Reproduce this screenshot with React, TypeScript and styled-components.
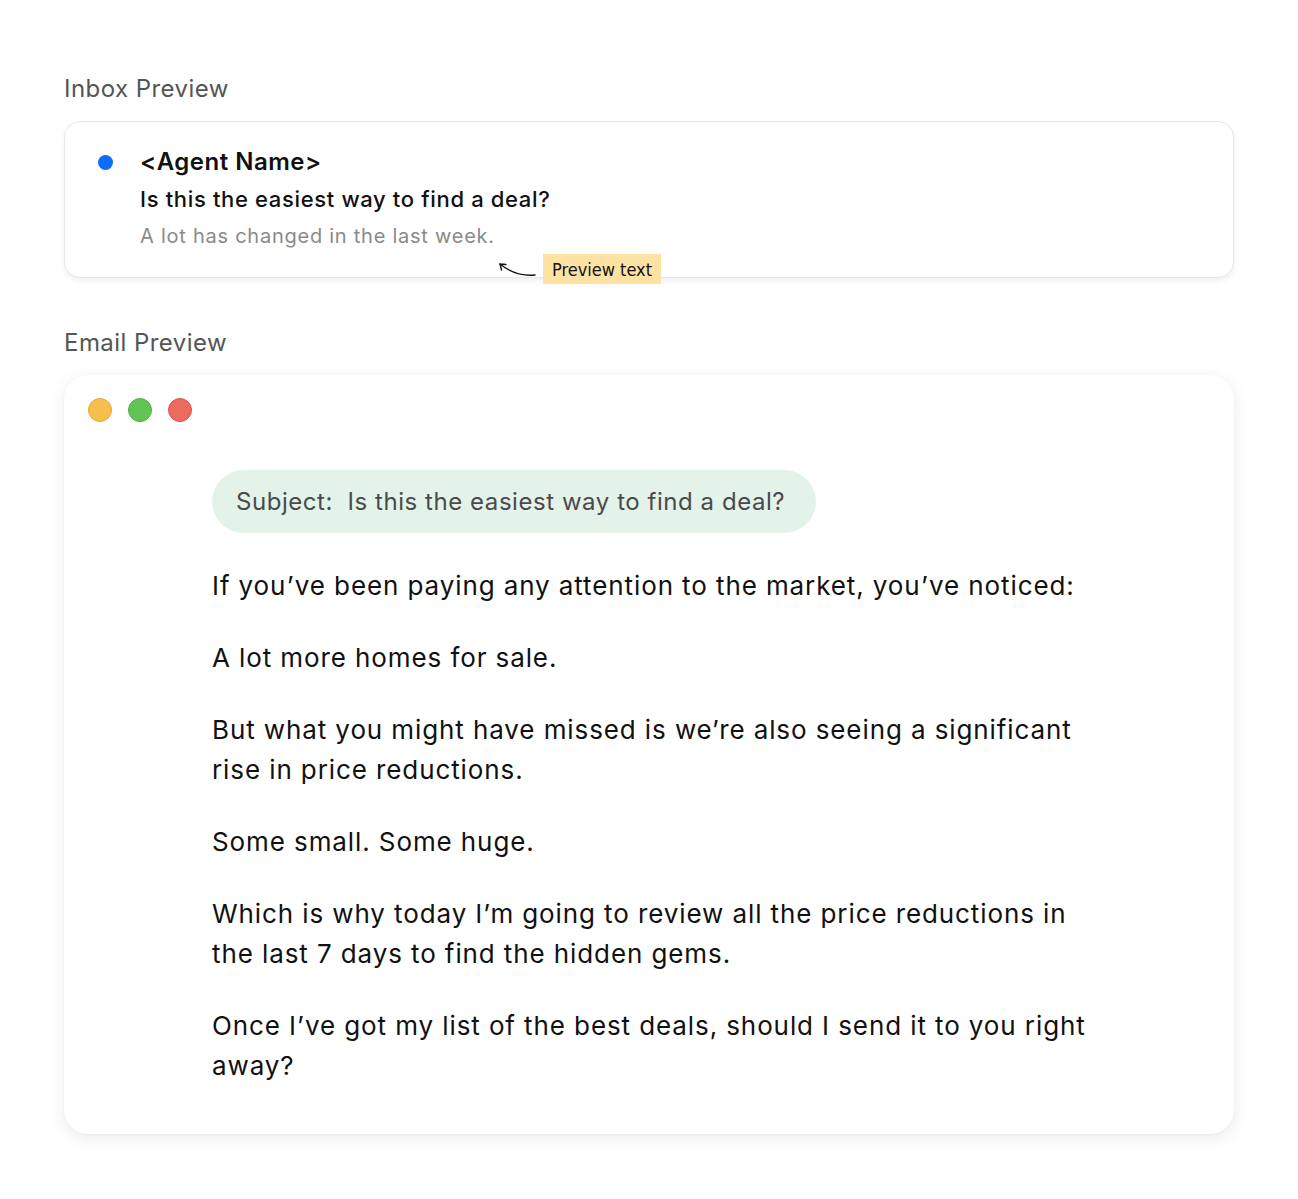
import styled, { createGlobalStyle } from 'styled-components'

const GlobalStyle = createGlobalStyle`
  html, body {
    margin: 0;
    padding: 0;
    background: #ffffff;
  }
  body {
    font-family: Inter, 'Noto Sans', sans-serif;
    color: #111111;
  }
`

// ── Layout ────────────────────────────────────────────────────────────────

const Page = styled.main`
  display: flex;
  flex-direction: column;
  padding: 74px 64px 64px;
  width: 1170px;
`

const SectionLabel = styled.h2`
  margin: 0 0 17px;
  font-size: 24px;
  line-height: 30px;
  font-weight: 400;
  letter-spacing: 0.45px;
  color: #555555;
`

// ── Inbox preview ─────────────────────────────────────────────────────────

const InboxCard = styled.section`
  position: relative;
  display: flex;
  gap: 27px;
  padding: 25px 32px 26px 33px;
  margin-bottom: 50px;
  border: 1px solid #e6e6e6;
  border-radius: 16px;
  background: #ffffff;
  box-shadow: 0 3px 6px rgba(0, 0, 0, 0.06);
`

const UnreadDot = styled.span`
  flex-shrink: 0;
  width: 15px;
  height: 15px;
  margin-top: 8px;
  border-radius: 999px;
  background: #0b6cff;
`

const InboxLines = styled.div`
  display: flex;
  flex-direction: column;
  gap: 7px;
`

const InboxLine = styled.div<{ $tone: 'sender' | 'subject' | 'preview' }>`
  line-height: 30px;
  font-size: ${({ $tone }) =>
    $tone === 'sender' ? '24px' : $tone === 'subject' ? '22px' : '20px'};
  font-weight: ${({ $tone }) =>
    $tone === 'sender' ? 600 : $tone === 'subject' ? 500 : 400};
  letter-spacing: ${({ $tone }) =>
    $tone === 'sender' ? '0.5px' : $tone === 'subject' ? '0.65px' : '0.75px'};
  color: ${({ $tone }) => ($tone === 'preview' ? '#8a8a8a' : '#111111')};
`

const Annotation = styled.div`
  position: absolute;
  left: 432px;
  top: 132px;
  display: flex;
  align-items: center;
  gap: 6px;
`

const Sticky = styled.span`
  display: inline-flex;
  align-items: center;
  height: 30px;
  padding: 0 9px;
  background: #fde2a4;
  font-family: 'Comic Sans MS', 'DejaVu Sans Condensed', sans-serif;
  font-size: 18px;
  color: #111111;
`

// ── Email preview ─────────────────────────────────────────────────────────

const EmailCard = styled.section`
  display: flex;
  flex-direction: column;
  padding: 23px 24px 48px;
  border-radius: 24px;
  background: #ffffff;
  box-shadow: 0 4px 18px rgba(0, 0, 0, 0.08), 0 1px 3px rgba(0, 0, 0, 0.04);
`

const WindowControls = styled.div`
  display: flex;
  gap: 16px;
  margin-bottom: 48px;
`

const Light = styled.span<{ $color: string; $edge: string }>`
  width: 24px;
  height: 24px;
  box-sizing: border-box;
  border-radius: 999px;
  background: ${({ $color }) => $color};
  border: 1px solid ${({ $edge }) => $edge};
`

const EmailBody = styled.div`
  display: flex;
  flex-direction: column;
  align-items: flex-start;
  padding-left: 124px;
`

const SubjectPill = styled.div`
  display: inline-flex;
  align-items: center;
  height: 63px;
  padding: 0 31px 0 24px;
  margin-bottom: 33px;
  border-radius: 999px;
  background: #e4f3ea;
  font-size: 24px;
  letter-spacing: 0.55px;
  color: #4a4a4a;
  white-space: pre;
`

const Paragraphs = styled.div`
  display: flex;
  flex-direction: column;
  gap: 32px;
  max-width: 885px;
`

const Paragraph = styled.p`
  margin: 0;
  font-size: 26px;
  line-height: 40px;
  letter-spacing: 0.9px;
  color: #111111;
`

const PARAGRAPHS = [
  'If you’ve been paying any attention to the market, you’ve noticed:',
  'A lot more homes for sale.',
  'But what you might have missed is we’re also seeing a significant rise in price reductions.',
  'Some small. Some huge.',
  'Which is why today I’m going to review all the price reductions in the last 7 days to find the hidden gems.',
  'Once I’ve got my list of the best deals, should I send it to you right away?',
]

export default function App() {
  return (
    <>
      <GlobalStyle />
      <Page>
        <SectionLabel>Inbox Preview</SectionLabel>
        <InboxCard>
          <UnreadDot aria-hidden />
          <InboxLines>
            <InboxLine $tone="sender">&lt;Agent Name&gt;</InboxLine>
            <InboxLine $tone="subject">Is this the easiest way to find a deal?</InboxLine>
            <InboxLine $tone="preview">A lot has changed in the last week.</InboxLine>
          </InboxLines>
          <Annotation>
            <svg width="40" height="20" viewBox="0 0 40 20" aria-hidden>
              <path
                d="M38 16 C 26 17, 14 14, 3 5"
                fill="none"
                stroke="#111"
                strokeWidth="1.4"
                strokeLinecap="round"
              />
              <path
                d="M3 5 L 9 5.5 M3 5 L 4.5 11"
                fill="none"
                stroke="#111"
                strokeWidth="1.4"
                strokeLinecap="round"
              />
            </svg>
            <Sticky>Preview text</Sticky>
          </Annotation>
        </InboxCard>

        <SectionLabel>Email Preview</SectionLabel>
        <EmailCard>
          <WindowControls aria-hidden>
            <Light $color="#f6bd4f" $edge="#e3a73a" />
            <Light $color="#61c454" $edge="#4fae43" />
            <Light $color="#ed6a5e" $edge="#d65549" />
          </WindowControls>
          <EmailBody>
            <SubjectPill>Subject:  Is this the easiest way to find a deal?</SubjectPill>
            <Paragraphs>
              {PARAGRAPHS.map((p) => (
                <Paragraph key={p}>{p}</Paragraph>
              ))}
            </Paragraphs>
          </EmailBody>
        </EmailCard>
      </Page>
    </>
  )
}
